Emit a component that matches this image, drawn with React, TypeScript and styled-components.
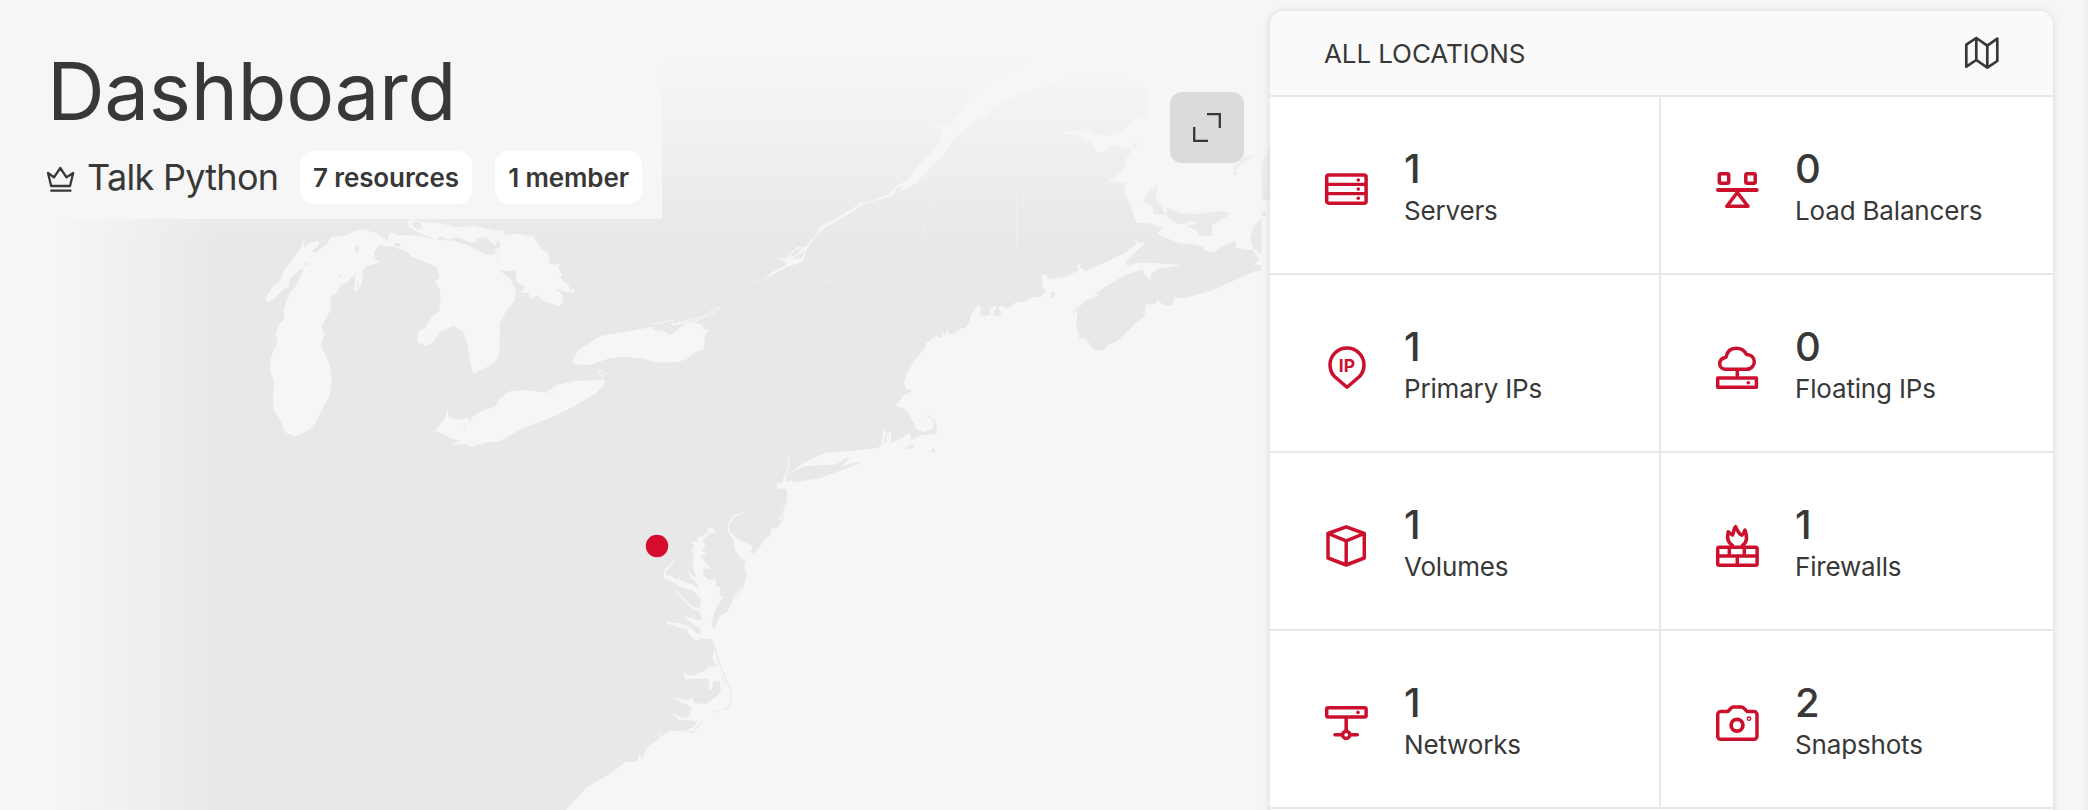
import React from "react";
import styled, { createGlobalStyle } from "styled-components";

const BG = "#f6f6f6";
const LAND = "#e8e8e8";
const INK = "#383838";
const RED = "#d50c2d";
const ICON_RED = "#cb102e";

const GlobalStyle = createGlobalStyle`
  * { box-sizing: border-box; }
  body {
    margin: 0;
    background: ${BG};
    color: ${INK};
    font-family: Inter, "Liberation Sans", sans-serif;
  }
`;

const Page = styled.main`
  display: flex;
  height: 810px;
  overflow: hidden;
  border-right: 4px solid #f1f1f1;
`;

const Hero = styled.section`
  position: relative;
  flex: 1;
  height: 810px;
`;

const MapCanvas = styled.svg`
  position: absolute;
  inset: 0;
  width: 1270px;
  height: 810px;
`;

const Heading = styled.header`
  position: relative;
  width: 662px;
  height: 219px;
  padding: 43px 0 0 46px;
  background: ${BG};
`;

const Title = styled.h1`
  margin: 0 0 12px 1px;
  font-size: 80px;
  line-height: 96px;
  font-weight: 400;
  letter-spacing: -0.4px;
`;

const ProjectRow = styled.div`
  display: flex;
  align-items: center;
  height: 53px;
`;

const ProjectName = styled.span`
  flex: none;
  width: 213px;
  margin-left: 11px;
  padding-bottom: 2px;
  font-size: 36px;
  line-height: 44px;
  letter-spacing: -0.7px;
  white-space: nowrap;
`;

const Pill = styled.span<{ $width: number }>`
  display: flex;
  flex: none;
  align-items: center;
  justify-content: center;
  width: ${(p) => p.$width}px;
  height: 53px;
  margin-right: 23px;
  border-radius: 14px;
  background: #fff;
  font-size: 26px;
  font-weight: 600;
  letter-spacing: -0.12px;
  white-space: nowrap;
  &:last-child {
    margin-right: 0;
  }
`;

const ExpandButton = styled.button`
  position: absolute;
  top: 92px;
  left: 1170px;
  display: flex;
  align-items: center;
  justify-content: center;
  width: 74px;
  height: 71px;
  padding: 0;
  border: 0;
  border-radius: 12px;
  background: #dbdbdb;
`;

const Card = styled.section`
  width: 783px;
  height: 850px;
  margin: 11px 31px 0 0;
  border-radius: 14px 14px 0 0;
  background: #fff;
  box-shadow: 0 0 8px rgba(0, 0, 0, 0.12);
  position: relative;
  flex: none;
`;

const CardHeader = styled.div`
  display: flex;
  align-items: center;
  justify-content: space-between;
  height: 86px;
  padding: 0 53px 0 54px;
  border-bottom: 2px solid #e8e8e8;
  border-radius: 14px 14px 0 0;
  background: #fafafa;
`;

const CardTitle = styled.h2`
  margin: 0;
  font-size: 26px;
  font-weight: 400;
  letter-spacing: -0.1px;
`;

const Grid = styled.div`
  display: grid;
  grid-template-columns: 391px 392px;
  grid-auto-rows: 178px;
`;

const Cell = styled.div`
  display: flex;
  align-items: center;
  gap: 36px;
  padding-left: 54px;
  border-bottom: 2px solid #e8e8e8;
  &:nth-child(odd) {
    border-right: 2px solid #e8e8e8;
  }
`;

const ResourceIcon = styled.svg`
  flex: none;
  width: 44px;
  height: 44px;
  margin-top: 8px;
  overflow: visible;
  fill: none;
  stroke: ${ICON_RED};
  stroke-width: 3.5;
  stroke-linecap: round;
  stroke-linejoin: round;
  .solid {
    fill: ${ICON_RED};
    stroke: none;
  }
`;

const Count = styled.div`
  font-size: 40px;
  line-height: 44px;
  font-weight: 500;
`;

const Label = styled.div`
  font-size: 26px;
  line-height: 40px;
  letter-spacing: -0.17px;
  white-space: nowrap;
`;

const Stat = styled.div`
  padding-top: 7px;
`;

const icons: Record<string, React.ReactNode> = {
  servers: (
    <>
      <rect x="2.7" y="8" width="39.4" height="28.2" rx="2" />
      <path d="M2.7 17.3H42M2.7 26.7H42" strokeWidth="3.2" />
      <circle className="solid" cx="34.3" cy="13" r="1.8" />
      <circle className="solid" cx="34.3" cy="22.1" r="1.8" />
      <circle className="solid" cx="34.3" cy="31.3" r="1.8" />
    </>
  ),
  balancers: (
    <>
      <rect x="4.3" y="6.7" width="9.4" height="9.6" rx="1.2" />
      <rect x="30.8" y="6.7" width="9.4" height="9.6" rx="1.2" />
      <path d="M3 23H41.7" strokeWidth="4" />
      <path d="M22.3 25.5L11.8 39.3H33Z" />
    </>
  ),
  primary: (
    <>
      <path d="M23 42.3L10.5 31.5A17 17 0 1 1 35.5 31.5Z" />
      <text className="solid" x="23" y="27" fontSize="17.5" fontWeight="700" textAnchor="middle">IP</text>
    </>
  ),
  floating: (
    <>
      <path d="M10.5 24.3H31.5C36 24.3 39.3 21 39.3 16.8C39.3 12.5 36 9.7 31.5 9.5C29.5 5.5 26 3.3 21 3.3C15.5 3.3 12 7 11 12.3C7.5 13 4.7 15 4.7 18.8C4.7 22 7.5 24.3 10.5 24.3Z" />
      <path d="M22.3 25V32" />
      <rect x="2.7" y="33" width="38.7" height="9.3" />
      <circle className="solid" cx="33.3" cy="37.7" r="1.8" />
    </>
  ),
  volumes: <path d="M22.2 3.8L40.3 10.5V35L22.2 42L4 35V10.5ZM4 10.5L22.2 17.8L40.3 10.5M22.2 17.8V42" />,
  firewalls: (
    <>
      <rect x="2.7" y="24.3" width="39.4" height="18" rx="1.5" />
      <path d="M3 33H42M14.3 24.5V33M29.3 24.5V33M22.3 33V42" />
      <path d="M17.5 22.5C11.5 19 12.2 13 13.2 8.8L17.5 12C19.3 10 17.8 6.5 20.5 3.6C21.8 6.5 23.5 10.8 26.8 12.2C29.2 11.5 28.6 9 30 7C32 12.5 32.6 19 27.4 22.5" />
    </>
  ),
  networks: (
    <>
      <rect x="2.7" y="6.7" width="39.4" height="9.4" rx="1.5" />
      <circle className="solid" cx="34" cy="11.4" r="1.8" />
      <path d="M22.2 17V30M11 33.8H18M26.4 33.8H33.3" strokeWidth="3.6" />
      <circle cx="22.2" cy="33.8" r="3.6" />
    </>
  ),
  snapshots: (
    <>
      <path d="M5.7 10.5H12C14.8 10.5 15 6 18.2 6H26.5C29.7 6 30.2 10.5 33 10.5H39A3 3 0 0 1 42 13.5V35.3A3 3 0 0 1 39 38.3H5.7A3 3 0 0 1 2.7 35.3V13.5A3 3 0 0 1 5.7 10.5Z" />
      <circle cx="22" cy="24.3" r="5.9" strokeWidth="3.8" />
      <circle cx="34" cy="17.7" r="1.7" strokeWidth="1.4" />
    </>
  ),
};

const resources = [
  { icon: "servers", count: 1, label: "Servers" },
  { icon: "balancers", count: 0, label: "Load Balancers" },
  { icon: "primary", count: 1, label: "Primary IPs" },
  { icon: "floating", count: 0, label: "Floating IPs" },
  { icon: "volumes", count: 1, label: "Volumes" },
  { icon: "firewalls", count: 1, label: "Firewalls" },
  { icon: "networks", count: 1, label: "Networks" },
  { icon: "snapshots", count: 2, label: "Snapshots" },
];

// Each region of the map is drawn in its own local scale.
const LAKES = "translate(240 200) scale(.33333)";
const GULF = "translate(740 60) scale(.34435 .33333)";
const NEW_ENGLAND = "translate(720 280) scale(.33333)";
const CHESAPEAKE = "translate(620 420) scale(.33333)";

const RegionMap = () => (
  <MapCanvas viewBox="0 0 1270 810">
    <defs>
      <linearGradient id="fadeTop" x1="0" y1="0" x2="0" y2="1">
        <stop offset="0" stopColor={BG} />
        <stop offset="1" stopColor={BG} stopOpacity="0" />
      </linearGradient>
      <linearGradient id="fadeLeft" x1="0" y1="0" x2="1" y2="0">
        <stop offset="0" stopColor={BG} />
        <stop offset="1" stopColor={BG} stopOpacity="0" />
      </linearGradient>
    </defs>
    <rect x="56" y="60" width="1205" height="750" fill={LAND} />
    <g transform={LAKES} fill={BG}>
      <path d="M160 708L135 697L118 655L101 630L99 590L103 550L92 515L90 485L100 450L112 430L108 400L118 372L133 358L131 335L138 305L152 275L165 262L180 235L190 208L182 208L150 235L145 262L130 268L100 298L80 308L76 295L100 258L120 245L130 215L155 180L180 150L192 118L193 145L210 128L238 122L235 140L215 150L228 158L260 132L275 110L315 107L345 92L370 88L410 100L445 125L445 105L455 97L470 105L540 107L580 118L640 122L680 135L742 165L765 148L782 140L775 115L765 138L745 118L735 112L712 115L705 128L685 125L655 112L620 118L605 108L590 120L555 105L540 100L520 90L500 72L510 58L545 65L600 70L650 82L700 78L770 92L795 88L790 105L835 102L880 110L905 148L925 160L928 190L945 195L960 190L955 205L968 228L955 230L985 255L990 270L1003 265L1002 278L975 275L945 265L968 285L968 310L955 318L905 300L895 285L870 298L865 278L843 278L855 260L830 245L825 212L780 212L810 235L827 270L825 300L800 330L780 370L778 465L765 485L735 505L700 522L693 495L683 435L670 395L640 378L600 395L580 425L558 438L532 425L533 395L555 385L575 350L598 335L602 290L598 265L585 245L600 235L590 200L515 170L500 155L460 140L420 135L402 155L405 178L420 187L380 198L370 210L365 250L352 275L342 270L348 220L318 250L300 255L290 280L273 290L272 330L245 378L252 405L242 437L268 490L276 540L268 590L245 630L230 665L205 690L180 705Z" />
      <path d="M996 485L1015 450L1050 428L1080 408L1140 398L1235 381L1245 390L1270 392L1285 404L1300 400L1320 382L1340 370L1365 368L1385 374L1392 388L1407 390L1395 404L1392 447L1360 460L1340 478L1310 487L1240 487L1215 476L1160 470L1110 474L1050 495L1010 493Z" />
      <path d="M585 692L615 655L625 622L624 650L655 660L685 655L690 668L695 652L725 632L765 620L780 595L810 574L850 570L905 576L960 583L920 577L950 555L1005 543L1090 540L1095 550L1070 578L1010 615L930 655L850 683L780 724L735 728L695 740L675 732L633 735L665 722L640 718Z" />
      <path d="M1240 372L1300 360L1295 373L1380 352L1438 320L1430 335L1370 362L1300 375M1075 512L1090 514L1088 530L1078 525ZM1088 535L1092 545" fill="none" stroke={BG} strokeWidth="3" />
      <path d="M1438 320L1500 268M625 620L665 598" fill="none" stroke="#eeeeee" strokeWidth="2" />
      <g fill={LAND}>
        <ellipse cx="351" cy="148" rx="6" ry="12" />
        <circle cx="200" cy="192" r="5" />
        <circle cx="298" cy="228" r="5" />
        <ellipse cx="472" cy="134" rx="10" ry="5" />
        <path d="M515 65L540 65L547 80L535 90L520 80Z" />
        <path d="M352 240L356 262L350 264ZM742 165L775 148L760 164ZM765 178L777 170L775 177ZM670 690L675 683L675 694Z" />
      </g>
    </g>
    <g transform={GULF} fill={BG}>
      <path d="M508 900L540 860L540 850L570 828L585 835L588 815L594 828L602 808L608 822L618 822L640 806L655 803L665 790L670 765L682 748L694 732L697 745L703 746L694 765L712 768L727 765L726 745L742 736L744 744L735 755L738 768L750 770L759 758L750 742L762 737L773 748L785 742L798 728L828 724L850 712L872 711L889 692L878 680L876 645L888 645L900 657L945 650L985 630L978 620L990 606L988 622L1003 634L1050 612L1110 583L1153 552L1142 535L1160 548L1177 548L1150 575L1118 605L1125 617L1150 610L1180 608L1280 614L1270 618L1215 626L1195 640L1192 658L1175 645L1170 627L1120 645L1060 680L1030 702L1048 704L1000 722L980 750L976 790L985 835L1000 835L1015 850L1025 867L1055 872L1070 855L1095 843L1120 820L1150 788L1175 770L1178 735L1195 730L1205 733L1213 718L1225 732L1240 738L1257 735L1260 712L1290 715L1370 692L1420 668L1490 637L1540 625V900Z" />
      <path d="M62 663L100 632L135 615L130 605L103 592L130 597L150 575L165 562L190 560L215 530L235 500L270 480L325 447L350 428L380 422L432 403L455 378L490 358L515 318L550 282L575 255L590 212L575 203L520 178L468 170L510 173L560 192L605 203L640 155L680 100L730 65L800 30L870 0H1540V615H1490L1507 600L1490 570L1475 570L1442 565L1437 543L1400 560L1375 577L1350 572L1345 560L1320 555L1275 550L1240 535L1210 520L1228 505L1190 490L1152 488L1142 465L1133 430L1115 400L1122 370L1085 368L1070 363L1090 350L1112 332L1120 300L1137 270L1100 257L1075 257L1055 278L1035 275L1020 250L1000 235L960 222L920 227L950 213L985 212L1005 203L1035 222L1070 228L1110 212L1140 182L1180 165L1187 130L1172 110L1190 98L1160 68L1100 50H1000L920 62L870 83L800 107L740 137L710 170L690 180L625 232L590 285L550 325L512 370L475 388L435 408L360 432L325 457L275 487L245 505L225 522L192 570L182 605L135 622Z" />
      <g fill={LAND}>
        <path d="M1235 442L1255 450L1280 460L1320 462L1400 453L1425 458L1410 472L1370 497L1372 527L1335 527L1325 510L1295 498L1328 490L1312 482L1290 492L1265 490L1237 468L1240 455ZM1213 372L1190 392L1170 425L1198 440L1202 463L1237 465L1225 440L1207 415ZM1430 345L1435 315L1465 290L1493 284L1480 297L1450 318L1440 335L1448 343ZM1515 475L1490 500L1482 535L1490 565L1512 583H1515ZM1514 310L1527 285L1537 262H1545V420H1514ZM1514 455L1530 457L1526 468H1514ZM900 715L905 695L916 697L912 712ZM963 768L975 745L1008 725L980 748ZM1140 265L1142 248L1156 250L1150 265ZM1150 238L1160 229L1159 238Z" />
        <path d="M705 768L713 778L711 782ZM734 762L742 748L755 752L757 764L748 769ZM442 400L462 381L475 380L460 395ZM140 592L165 568L182 565L160 586ZM150 597L170 584L187 570L180 595Z" />
      </g>
      <path d="M0 683L30 668L60 663L400 664L412 635L430 625L455 629L470 625L488 600L495 575L520 560L533 530L535 495L552 465L562 420L600 375L635 315M525 348H610M680 348L745 330L795 355L803 375V565L840 585L838 610L855 640L876 643" fill="none" stroke="#eeeeee" strokeWidth="2" />
    </g>
    <g transform={NEW_ENGLAND} fill={BG}>
      <path d="M585 239L572 262L560 280L552 310L560 328L577 332L550 347L528 377L555 387L570 405L575 420L583 430L587 445L610 457L640 448L643 430L630 412L617 408L625 405L643 420L651 440L650 462L605 465L573 482L570 458L540 477L512 488L514 454L502 462L490 446L487 470L483 497L470 505L385 514L318 518L290 530L245 552L215 575L190 598L170 610L172 625L203 628L200 665L188 690L178 720H1623V239Z" />
      <path d="M203 522Q215 555 190 598" fill="none" stroke={BG} strokeWidth="3" />
      <path d="M0 74Q60 20 120 4" fill="none" stroke="#eeeeee" strokeWidth="2" />
      <path d="M176 612Q170 600 186 598Q193 606 176 612ZM198 594L215 578L240 564L265 558L350 553L372 537L390 533L360 562L400 548L430 547L380 565L300 595L250 602L213 608L222 600L198 606ZM553 508L570 492L587 500L575 505ZM620 515L633 513L642 502L645 519ZM492 488L495 466L501 466L499 488Z" fill={LAND} />
    </g>
    <g transform={CHESAPEAKE} fill={BG}>
      <path d="M500 205L503 230L495 270L487 300L470 325L455 325L450 348L435 355L420 380L405 397L393 402L397 378L370 365L345 350L330 335L327 315L345 290L370 280L376 268L365 278L340 286L322 312L325 335L340 360L345 390L360 412L378 425L372 442L382 465L372 485L362 500L340 535L322 575L300 588L287 620L281 628L275 610L283 575L300 545L312 530L298 525L302 505L287 495L288 478L265 480L250 465L250 447L272 445L255 425L243 408L260 400L243 392L256 380L248 360L262 345L287 335L280 322L262 325L264 335L245 350L232 350L230 365L213 362L223 380L215 390L220 405L218 440L230 475L215 465L201 448L212 473L232 490L236 507L215 492L185 484L177 472L170 480L152 465L138 470L138 455L160 430V414L155 430L135 447L129 472L148 480L180 500L215 509L245 538L240 565L220 562L195 538L153 500L180 530L215 565L240 577L245 600L232 600L190 586L215 610L240 625L243 640L235 642L205 618L175 610L138 605L142 612L200 628L210 648L230 662L245 655L275 658L283 690L276 715L292 742L262 740L258 750L225 765L202 768L192 748L195 778L265 775L268 809L276 808L280 782L300 785L303 815L288 830L258 852L225 850L213 830L205 842L163 832L190 850L215 860L207 890L185 895L158 878L175 899L235 903L215 925L195 932L150 932L125 950L118 928L120 955L80 982L65 1022L58 998L52 1025L18 1026L-42 1068L-102 1104L-162 1170H1923V205Z" />
      <path d="M276 660L302 742L328 798Q340 835 326 864L312 868M297 872L282 878M248 904L218 937L200 931M375 480L366 504L347 537M490 268L487 300L470 322M306 775L316 790" fill="none" stroke={LAND} strokeWidth="3.5" />
    </g>
    <rect x="0" y="59" width="1270" height="186" fill="url(#fadeTop)" />
    <rect x="49" y="59" width="176" height="751" fill="url(#fadeLeft)" />
    <circle cx="657" cy="546" r="11.2" fill={RED} />
  </MapCanvas>
);

export default function App() {
  return (
    <Page>
      <GlobalStyle />
      <Hero>
        <RegionMap />
        <Heading>
          <Title>Dashboard</Title>
          <ProjectRow>
            <svg width="30" height="30" viewBox="0 0 30 30" fill="none" stroke={INK} strokeWidth="2.3" strokeLinejoin="round" strokeLinecap="round">
              <path d="M2 10L5.2 23H24L27.2 10L20.5 14.3L14.3 5L8 14.3ZM5.2 27.7H24.5" />
            </svg>
            <ProjectName>Talk Python</ProjectName>
            <Pill $width={172}>7 resources</Pill>
            <Pill $width={147}>1 member</Pill>
          </ProjectRow>
        </Heading>
        <ExpandButton aria-label="Expand map">
          <svg width="28" height="29" viewBox="0 0 28 29" fill="none" stroke={INK} strokeWidth="2.3">
            <path d="M14 1.2H26.8V15M1.2 14V27.8H15" />
          </svg>
        </ExpandButton>
      </Hero>
      <Card>
        <CardHeader>
          <CardTitle>ALL LOCATIONS</CardTitle>
          <svg width="36" height="36" viewBox="0 0 36 36" fill="none" stroke={INK} strokeWidth="2.7" strokeLinejoin="round">
            <path d="M2.3 9.7L12.3 3L23.3 10.7L33.3 3.6V26L23.3 32.7L12.3 25L2.3 31.7ZM12.3 3V25M23.3 10.7V32.7" />
          </svg>
        </CardHeader>
        <Grid>
          {resources.map((r) => (
            <Cell key={r.label}>
              <ResourceIcon viewBox="0 0 44 44">{icons[r.icon]}</ResourceIcon>
              <Stat>
                <Count>{r.count}</Count>
                <Label>{r.label}</Label>
              </Stat>
            </Cell>
          ))}
        </Grid>
      </Card>
    </Page>
  );
}
